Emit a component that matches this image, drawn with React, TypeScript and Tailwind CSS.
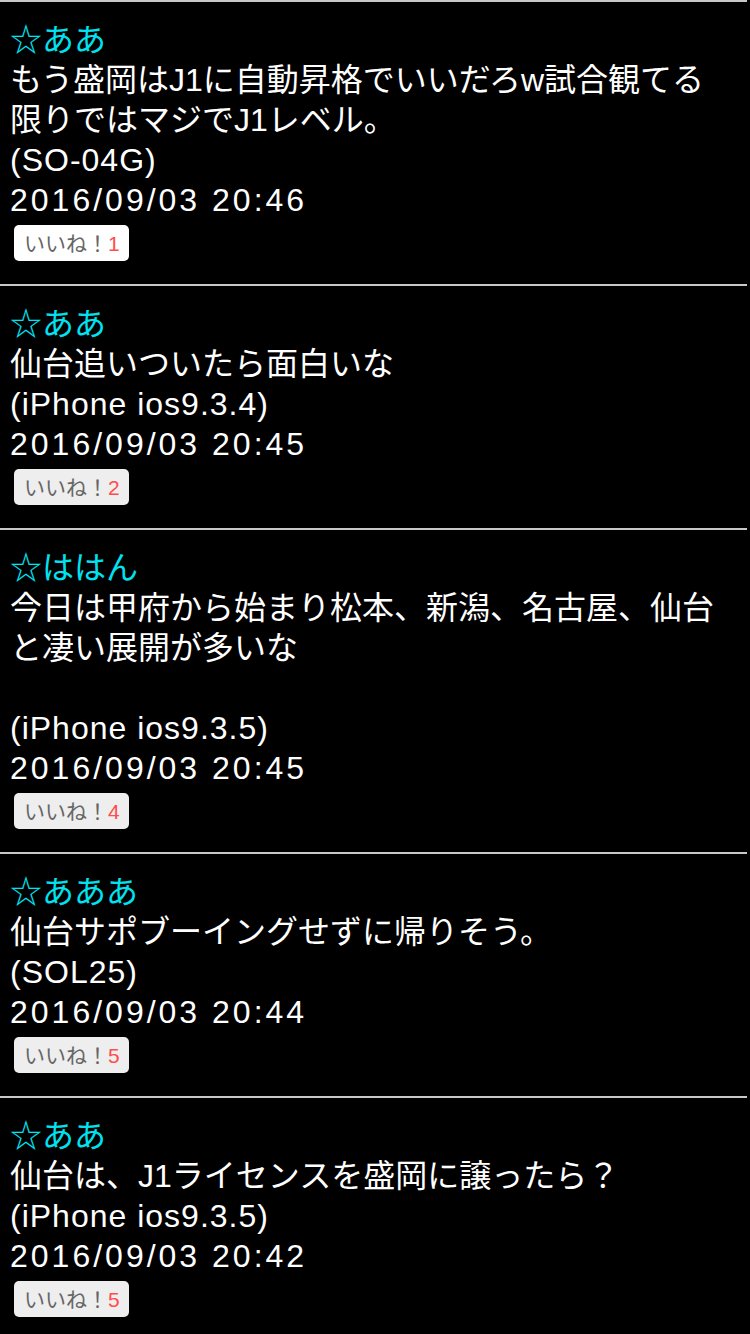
const posts = [
  {
    id: 1,
    name: "☆ああ",
    body: ["もう盛岡はJ1に自動昇格でいいだろw試合観てる", "限りではマジでJ1レベル。"],
    device: "(SO-04G)",
    date: "2016/09/03 20:46",
    likes: 1,
    liked: true,
  },
  {
    id: 2,
    name: "☆ああ",
    body: ["仙台追いついたら面白いな"],
    device: "(iPhone ios9.3.4)",
    date: "2016/09/03 20:45",
    likes: 2,
  },
  {
    id: 3,
    name: "☆ははん",
    body: ["今日は甲府から始まり松本、新潟、名古屋、仙台", "と凄い展開が多いな", ""],
    device: "(iPhone ios9.3.5)",
    date: "2016/09/03 20:45",
    likes: 4,
  },
  {
    id: 4,
    name: "☆あああ",
    body: ["仙台サポブーイングせずに帰りそう。"],
    device: "(SOL25)",
    date: "2016/09/03 20:44",
    likes: 5,
  },
  {
    id: 5,
    name: "☆ああ",
    body: ["仙台は、J1ライセンスを盛岡に譲ったら？"],
    device: "(iPhone ios9.3.5)",
    date: "2016/09/03 20:42",
    likes: 5,
  },
];

const App = () => {
  return (
    <div
      className="min-h-[1334px] w-[750px] bg-black text-white"
      style={{ fontFamily: '"Liberation Sans", "Noto Sans CJK JP", sans-serif' }}
    >
      <div className="w-[747px]">
        {posts.map((post) => (
          <div
            key={post.id}
            className="border-t-2 border-[#c8c8c8] px-[10px] pt-[18px] pb-[23px] text-[32px] leading-[40px]"
          >
            <div className="text-[#00e2f0]">{post.name}</div>
            {post.body.map((line, i) => (
              <div key={i} className="min-h-[40px] whitespace-nowrap">
                {line}
              </div>
            ))}
            <div className="tracking-[1px]">{post.device}</div>
            <div className="tracking-[3px]">{post.date}</div>
            <div className="mt-[5px] flex pl-[4px]">
              <div
                className={`flex h-[36px] items-center rounded-[5px] pl-[10px] pr-[9px] text-[21px] leading-none ${
                  post.liked ? "bg-white" : "bg-[#eeeeee]"
                }`}
              >
                <span className="text-[#666666]">いいね！</span>
                <span className="text-[#ff4d4d]">{post.likes}</span>
              </div>
            </div>
          </div>
        ))}
      </div>
    </div>
  );
};

export default App;
